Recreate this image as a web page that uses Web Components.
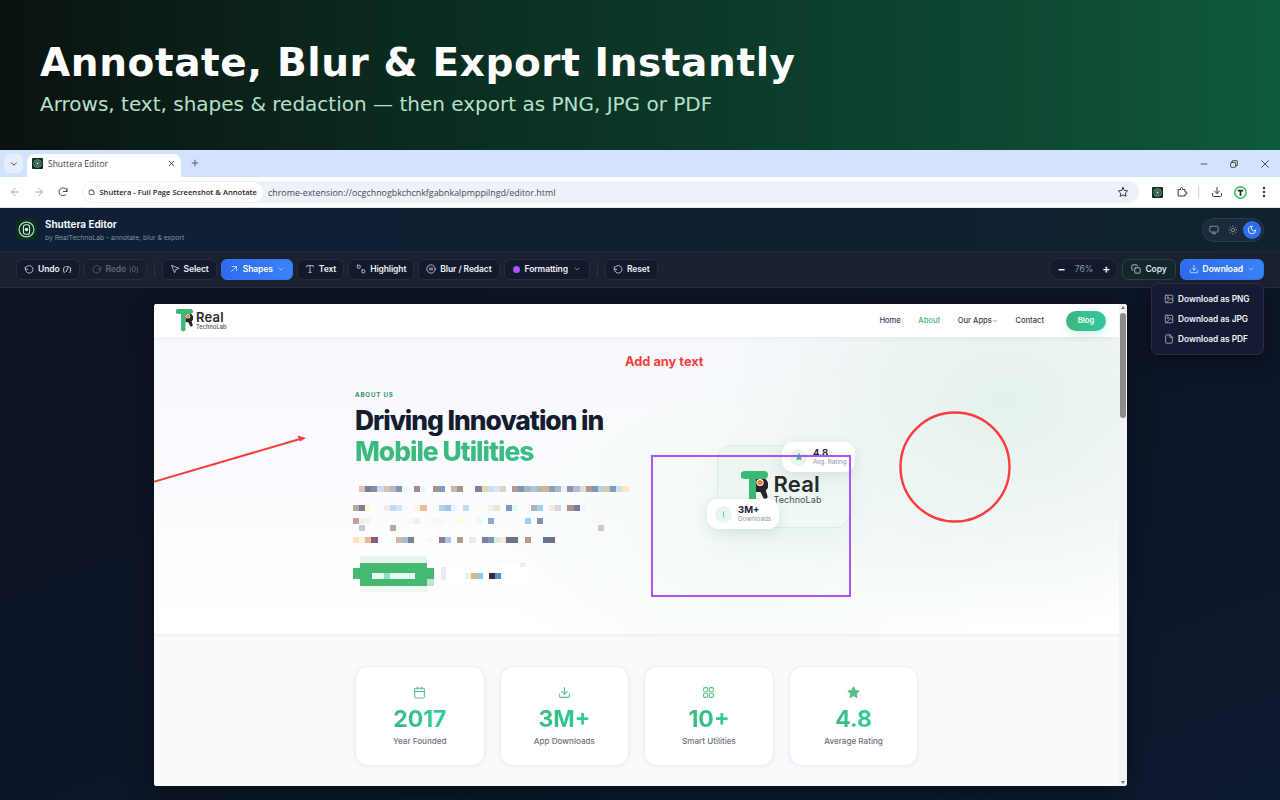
<!DOCTYPE html>
<html>
<head>
<meta charset="utf-8">
<title>Shuttera Editor</title>
<style>
html, body { margin: 0; height: 800px; overflow: hidden; background: #0c1426; }
body { display: flex; flex-direction: column; font-family: Inter, "Liberation Sans", sans-serif; }
</style>
</head>
<body>
<promo-banner title="Annotate, Blur &amp; Export Instantly" subtitle="Arrows, text, shapes &amp; redaction — then export as PNG, JPG or PDF"></promo-banner>
<browser-chrome></browser-chrome>
<editor-header></editor-header>
<editor-toolbar></editor-toolbar>
<canvas-stage></canvas-stage>

<script>
const svg = (body, size = 12, extra = "") =>
    `<svg width="${size}" height="${size}" viewBox="0 0 24 24" fill="none" stroke="currentColor" stroke-width="2" stroke-linecap="round" stroke-linejoin="round" ${extra}>${body}</svg>`;

const ICONS = {
    undo: '<path d="M3 7v6h6"/><path d="M3.5 13a9 9 0 1 0 2.6-6.4L3 9.5"/>',
    redo: '<path d="M21 7v6h-6"/><path d="M20.5 13a9 9 0 1 1-2.6-6.4L21 9.5"/>',
    pointer: '<path d="M4 4l7 17 2.5-7.5L21 11z"/>',
    arrow: '<path d="M6 18L18 6"/><path d="M8 6h10v10"/>',
    text: '<path d="M4 7V4h16v3"/><path d="M12 4v16"/><path d="M9 20h6"/>',
    highlight: '<rect x="3" y="3" width="7" height="7" rx="1"/><rect x="14" y="14" width="7" height="7" rx="1"/>',
    blur: '<circle cx="12" cy="12" r="10"/><path d="M8 10h8"/><path d="M8 14h8"/>',
    chevron: '<path d="M6 9l6 6 6-6"/>',
    copy: '<rect x="9" y="9" width="13" height="13" rx="2"/><path d="M5 15H4a2 2 0 0 1-2-2V4a2 2 0 0 1 2-2h9a2 2 0 0 1 2 2v1"/>',
    download: '<path d="M21 15v4a2 2 0 0 1-2 2H5a2 2 0 0 1-2-2v-4"/><path d="M7 10l5 5 5-5"/><path d="M12 15V3"/>',
    image: '<rect x="3" y="3" width="18" height="18" rx="2"/><circle cx="9" cy="9" r="2"/><path d="M21 15l-5-5L5 21"/>',
    file: '<path d="M14 2H6a2 2 0 0 0-2 2v16a2 2 0 0 0 2 2h12a2 2 0 0 0 2-2V8z"/><path d="M14 2v6h6"/>',
    monitor: '<rect x="2" y="3" width="20" height="14" rx="2"/><path d="M8 21h8"/><path d="M12 17v4"/>',
    sun: '<circle cx="12" cy="12" r="4"/><path d="M12 2v2M12 20v2M4.9 4.9l1.4 1.4M17.7 17.7l1.4 1.4M2 12h2M20 12h2M4.9 19.1l1.4-1.4M17.7 6.3l1.4-1.4"/>',
    moon: '<path d="M12 3a6 6 0 0 0 9 9 9 9 0 1 1-9-9z"/>',
    calendar: '<rect x="3" y="4" width="18" height="18" rx="2"/><path d="M16 2v4M8 2v4M3 10h18"/>',
    grid: '<rect x="3" y="3" width="7.5" height="7.5" rx="2"/><rect x="13.5" y="3" width="7.5" height="7.5" rx="2"/><rect x="3" y="13.5" width="7.5" height="7.5" rx="2"/><rect x="13.5" y="13.5" width="7.5" height="7.5" rx="2"/>',
    star: '<path fill="currentColor" d="M12 2l3.1 6.3 6.9 1-5 4.9 1.2 6.9-6.2-3.3-6.2 3.3L7 14.2 2 9.3l6.9-1z"/>',
    back: '<path d="M19 12H5"/><path d="M12 19l-7-7 7-7"/>',
    forward: '<path d="M5 12h14"/><path d="M12 5l7 7-7 7"/>',
    reload: '<path d="M20 11a8 8 0 1 0-2.3 6.3"/><path d="M20 4v7h-7"/>',
    puzzle: '<path d="M5 7h4V5a2 2 0 0 1 4 0v2h5v5h2a2 2 0 0 1 0 4h-2v4H5z"/>'
};

// little camera ring badge used as favicon and header logo
const ringLogo = size => `<svg width="${size}" height="${size}" viewBox="0 0 24 24">
    <rect width="24" height="24" rx="${size > 16 ? 5 : 2}" fill="#0c3020"/>
    <circle cx="12" cy="12" r="8.500" fill="none" stroke="#a9e0bd" stroke-width="1.300"/>
    <rect x="8.500" y="6.500" width="7" height="11" rx="2.500" fill="none" stroke="#d7efe0" stroke-width="1.200"/>
    <circle cx="12" cy="12" r="2" fill="#d7efe0"/>
</svg>`;

const brandMark = width => `<svg width="${width}" height="${width * 35 / 27}" viewBox="0 0 27 35">
    <path d="M15 7h5.500a7 7 0 0 1 4.300 12.400l1.700 5.600a2.300 2.300 0 0 1-4.300 1.500L19.500 21H15z" fill="#262626"/>
    <path d="M3.500 0H23a3.800 3.800 0 0 1 0 8h-8v24a3.500 3.500 0 0 1-7 0V8H3.500a4 4 0 0 1 0-8z" fill="#3cb878"/>
    <circle cx="19" cy="11.500" r="3.600" fill="#fff"/>
    <circle cx="19" cy="11.500" r="2.600" fill="#f47b2c"/>
</svg>`;

class PromoBanner extends HTMLElement {
    constructor () {
        super();
        this.attachShadow({mode: "open"});
    }
    connectedCallback () {
        this.shadowRoot.innerHTML = `
        <style>
        :host {
            display: block;
            height: 150px;
            box-sizing: border-box;
            padding: 39px 40px 0;
            color: #fff;
            font-family: "DejaVu Sans", sans-serif;
            background: linear-gradient(90deg, #0a1210 0%, #0b2a1f 30%, #0c3c2b 60%, #0e4a33 82%, #0f5a3c 100%);
        }
        h1 { margin: 0; font-size: 39px; line-height: 48px; font-weight: 700; letter-spacing: 0.6px; }
        p { margin: 5px 0 0; font-size: 20px; line-height: 24px; color: #b5e0cb; }
        </style>
        <h1>${this.getAttribute("title")}</h1>
        <p>${this.getAttribute("subtitle")}</p>
        `;
    }
}
customElements.define("promo-banner", PromoBanner);

class BrowserChrome extends HTMLElement {
    constructor () {
        super();
        this.attachShadow({mode: "open"});
    }
    connectedCallback () {
        this.shadowRoot.innerHTML = `
        <style>
        :host { display: block; font-family: "Open Sans", "Liberation Sans", sans-serif; color: #3c4043; }
        .strip { height: 27px; background: #d3e3fd; display: flex; align-items: flex-end; padding-left: 4px; }
        .tablist { width: 19px; height: 19px; margin-bottom: 4px; border-radius: 6px; background: #e6eefd; color: #1f2a44; display: grid; place-items: center; }
        .tab { width: 154px; height: 23px; margin-left: 4px; background: #fff; border-radius: 8px 8px 0 0; display: flex; align-items: center; padding: 0 5px 4px 5px; box-sizing: border-box; gap: 5px; font-size: 8.500px; }
        .tab span { flex: 1; }
        .tab svg:first-child { flex: none; }
        .plus { margin: 0 0 5px 9px; color: #444; display: grid; place-items: center; height: 18px; }
        .win { margin-left: auto; display: flex; align-self: center; color: #333; }
        .win div { width: 30.500px; display: grid; place-items: center; }
        .bar { height: 30px; background: #fff; border-bottom: 1px solid #dfe3ea; display: flex; align-items: center; padding: 0 0 0 9px; box-sizing: content-box; }
        .nav { display: flex; gap: 12px; color: #a8abb0; margin-right: 13px; }
        .nav svg:last-child { color: #474747; }
        .omni { width: 1057px; height: 22px; border-radius: 11px; background: #edf2fa; display: flex; align-items: center; padding: 0 10px 0 1px; box-sizing: border-box; font-size: 8.600px; flex: none; }
        .chip { width: 180px; box-sizing: border-box; height: 20px; border-radius: 10px; background: #fff; display: flex; align-items: center; gap: 4px; padding: 0 6px 0 5px; color: #1f1f1f; font-weight: 600; font-size: 7.600px; white-space: nowrap; }
        .url { margin-left: 5px; color: #474a4f; font-size: 8.900px; flex: 1; }
        .star { color: #333; display: grid; }
        .tools { display: flex; align-items: center; margin-left: 13px; color: #3a3a3a; }
        .tools > * { flex: none; }
        .sep { width: 1px; height: 14px; background: #c9d7ee; }
        </style>
        <div class="strip">
            <div class="tablist">${svg(ICONS.chevron, 10, 'stroke-width="3"')}</div>
            <div class="tab">${ringLogo(11)}<span>Shuttera Editor</span>${svg('<path d="M6 6l12 12M18 6L6 18"/>', 9, 'style="color:#222" stroke-width="3"')}</div>
            <div class="plus">${svg('<path d="M12 5v14M5 12h14"/>', 10)}</div>
            <div class="win">
                <div>${svg('<path d="M5 12h14"/>', 10)}</div>
                <div>${svg('<rect x="4" y="8" width="12" height="12" rx="2"/><path d="M8 8V5a1 1 0 0 1 1-1h10a1 1 0 0 1 1 1v10a1 1 0 0 1-1 1h-3"/>', 10)}</div>
                <div>${svg('<path d="M4 4l16 16M20 4L4 20"/>', 10)}</div>
            </div>
        </div>
        <div class="bar">
            <div class="nav">${svg(ICONS.back, 12)}${svg(ICONS.forward, 12)}${svg(ICONS.reload, 12)}</div>
            <div class="omni">
                <div class="chip">${svg(ICONS.puzzle, 10)}Shuttera - Full Page Screenshot &amp; Annotate</div>
                <span class="url">chrome-extension://ocgchnogbkchcnkfgabnkalpmppilngd/editor.html</span>
                <div class="star">${svg('<path d="M12 3l2.800 5.900 6.400.9-4.600 4.500 1.100 6.400L12 17.700l-5.700 3 1.100-6.400L2.800 9.800l6.400-.9z"/>', 12)}</div>
            </div>
            <div class="tools">
                ${ringLogo(11)}
                <div style="width:13px"></div>
                ${svg(ICONS.puzzle, 12)}
                <div style="width:10px"></div>
                <div class="sep"></div>
                <div style="width:12px"></div>
                ${svg(ICONS.download, 12)}
                <div style="width:11px"></div>
                <svg width="13" height="13" viewBox="0 0 24 24"><circle cx="12" cy="12" r="10.500" fill="#fff" stroke="#35c46f" stroke-width="3"/><path d="M7 7h10v3h-3.500v8h-3v-8H7z" fill="#222"/></svg>
                <div style="width:15px"></div>
                <svg width="4" height="12" viewBox="0 0 4 12" fill="#333"><circle cx="2" cy="2" r="1.200"/><circle cx="2" cy="6" r="1.200"/><circle cx="2" cy="10" r="1.200"/></svg>
            </div>
        </div>
        `;
    }
}
customElements.define("browser-chrome", BrowserChrome);

class EditorHeader extends HTMLElement {
    constructor () {
        super();
        this.attachShadow({mode: "open"});
    }
    connectedCallback () {
        this.shadowRoot.innerHTML = `
        <style>
        :host { display: flex; align-items: center; height: 43px; padding: 0 16px; box-sizing: border-box; background: linear-gradient(90deg, #0f1f35, #0f2030 70%, #10232f); color: #fff; }
        .logo { display: grid; margin-right: 8px; }
        .text { padding-top: 1px; }
        .title { font-size: 9.900px; font-weight: 700; line-height: 12px; color: #f1f5f9; }
        .sub { font-size: 6.800px; line-height: 11px; margin-top: 2px; color: #8290a6; }
        .theme { margin-left: auto; width: 62px; height: 24px; box-sizing: border-box; border: 1px solid #2a3a4f; background: #1b2a3d; border-radius: 12px; display: flex; align-items: center; justify-content: space-between; padding: 0 2px 0 6px; color: #8c9bb0; }
        .on { width: 18px; height: 18px; border-radius: 50%; background: #2f6fed; display: grid; place-items: center; color: #fff; }
        </style>
        <div class="logo">${ringLogo(21)}</div>
        <div class="text">
            <div class="title">Shuttera Editor</div>
            <div class="sub">by RealTechnoLab - annotate, blur &amp; export</div>
        </div>
        <div class="theme">
            ${svg(ICONS.monitor, 10)}
            <span style="margin-left:3px;display:grid">${svg(ICONS.sun, 10)}</span>
            <div class="on">${svg(ICONS.moon, 10)}</div>
        </div>
        `;
    }
}
customElements.define("editor-header", EditorHeader);

class ToolButton extends HTMLElement {
    constructor () {
        super();
        this.attachShadow({mode: "open"});
    }
    connectedCallback () {
        const icon = this.getAttribute("icon");
        const caret = this.hasAttribute("caret") ? `<span class="caret">${svg(ICONS.chevron, 8)}</span>` : "";
        this.shadowRoot.innerHTML = `
        <style>
        :host { display: flex; flex: none; align-items: center; height: 21px; box-sizing: border-box; gap: 4px; padding: 0 7px; border-radius: 6px; border: 1px solid #232c40; background: #131a2e; color: #eef2f7; font-size: 8.500px; letter-spacing: -0.1px; font-weight: 600; white-space: nowrap; }
        :host([variant=primary]) { background: linear-gradient(90deg, #2f6bed, #3b82f6); border-color: #3177f0; color: #fff; }
        :host([variant=muted]) { background: #171e2e; color: #5d6678; }
        :host([variant=copy]) { background: #16252c; border-color: #23463f; color: #dce6ee; }
        svg { display: block; flex: none; }
        .icon { color: #c6cdd8; display: grid; }
        :host([variant=primary]) .icon { color: #cfe0ff; }
        :host([variant=muted]) .icon { color: #566074; }
        .dot { width: 7px; height: 7px; border-radius: 50%; background: #a855f7; }
        .caret { opacity: 0.7; display: grid; }
        ::slotted(small) { font-size: 7px; opacity: 0.8; margin-left: -1px; }
        </style>
        ${icon == "dot" ? '<span class="dot"></span>' : `<span class="icon">${svg(ICONS[icon], 10)}</span>`}
        <slot></slot>
        ${caret}
        `;
    }
}
customElements.define("tool-button", ToolButton);

class EditorToolbar extends HTMLElement {
    constructor () {
        super();
        this.attachShadow({mode: "open"});
    }
    connectedCallback () {
        this.shadowRoot.innerHTML = `
        <style>
        :host { display: flex; align-items: center; height: 37px; box-sizing: border-box; padding: 0 16px 1px; gap: 4px; background: #1a2130; border-top: 1px solid #1d2a3b; border-bottom: 1px solid #252d3d; position: relative; z-index: 5; }
        .sep { width: 1px; height: 15px; background: #2b3445; margin: 0 3px; }
        .zoom { margin-left: auto; display: flex; align-items: center; justify-content: space-between; width: 69px; height: 22px; box-sizing: border-box; padding: 0 7px; border-radius: 11px; background: #131a2e; border: 1px solid #232c40; color: #fff; font-size: 8.500px; }
        .zoom b { font-size: 12px; font-weight: 600; line-height: 1; }
        .zoom span { color: #8b97ab; }
        .menu { position: absolute; right: 16px; top: 31px; width: 113px; height: 72px; box-sizing: border-box; padding: 5px 12px; border-radius: 7px; background: #141b33; border: 1px solid #252e45; color: #f1f4f9; font-size: 8.300px; font-weight: 600; box-shadow: 0 8px 18px rgba(0,0,0,.35); }
        .menu div { display: flex; align-items: center; gap: 4px; height: 20px; white-space: nowrap; }
        .menu svg { color: #aab3c2; flex: none; }
        </style>
        <tool-button icon="undo">Undo <small>(7)</small></tool-button>
        <tool-button icon="redo" variant="muted">Redo <small>(0)</small></tool-button>
        <div class="sep"></div>
        <tool-button icon="pointer">Select</tool-button>
        <tool-button icon="arrow" variant="primary" caret>Shapes</tool-button>
        <tool-button icon="text">Text</tool-button>
        <tool-button icon="highlight">Highlight</tool-button>
        <tool-button icon="blur">Blur / Redact</tool-button>
        <tool-button icon="dot" caret style="padding:0 8px;gap:5px">Formatting</tool-button>
        <div class="sep"></div>
        <tool-button icon="undo">Reset</tool-button>
        <div class="zoom"><b>−</b><span>76%</span><b>+</b></div>
        <tool-button icon="copy" variant="copy" style="padding:0 8px">Copy</tool-button>
        <tool-button icon="download" variant="primary" caret style="padding:0 8px">Download</tool-button>
        <div class="menu">
            <div>${svg(ICONS.image, 10)}Download as PNG</div>
            <div>${svg(ICONS.image, 10)}Download as JPG</div>
            <div>${svg(ICONS.file, 10)}Download as PDF</div>
        </div>
        `;
    }
}
customElements.define("editor-toolbar", EditorToolbar);

class BrandLogo extends HTMLElement {
    constructor () {
        super();
        this.attachShadow({mode: "open"});
    }
    connectedCallback () {
        const big = this.hasAttribute("big");
        this.shadowRoot.innerHTML = `
        <style>
        :host { display: inline-flex; align-items: center; gap: ${big ? 5 : 3}px; color: #2a2a2a; }
        .real { font-size: ${big ? 22 : 13}px; line-height: ${big ? 21 : 13}px; font-weight: 600; display: block; letter-spacing: .2px; }
        .lab { font-size: ${big ? 9 : 5.600}px; line-height: ${big ? 9 : 7}px; display: block; color: #4a4a4a; letter-spacing: .1px; }
        svg { display: block; }
        </style>
        ${brandMark(big ? 27 : 17)}
        <div><span class="real">Real</span><span class="lab">TechnoLab</span></div>
        `;
    }
}
customElements.define("brand-logo", BrandLogo);

class SiteNav extends HTMLElement {
    constructor () {
        super();
        this.attachShadow({mode: "open"});
    }
    connectedCallback () {
        this.shadowRoot.innerHTML = `
        <style>
        :host { display: flex; align-items: center; height: 33px; padding: 0 13px 0 22px; background: #fff; font-size: 7.600px; font-weight: 500; color: #374151; box-shadow: 0 1px 6px rgba(30,50,80,.06); position: relative; z-index: 1; }
        nav { margin-left: auto; display: flex; align-items: center; gap: 17.500px; }
        .active { color: #46b97a; }
        .apps { display: flex; align-items: center; gap: 0; }
        .blog { margin-left: 4.500px; width: 40px; height: 20px; border-radius: 10px; background: linear-gradient(90deg, #3fb67c, #2fc9a2); color: #fff; font-weight: 600; display: grid; place-items: center; box-shadow: 0 4px 9px rgba(50,190,140,.2); }
        </style>
        <brand-logo></brand-logo>
        <nav>
            <span>Home</span>
            <span class="active">About</span>
            <span class="apps">Our Apps ${svg(ICONS.chevron, 6)}</span>
            <span>Contact</span>
            <span class="blog">Blog</span>
        </nav>
        `;
    }
}
customElements.define("site-nav", SiteNav);

// a line of pixelated text: one cell per colour, "-" leaves a gap
class PixelRow extends HTMLElement {
    constructor () {
        super();
        this.attachShadow({mode: "open"});
    }
    connectedCallback () {
        const cells = this.getAttribute("cells").split(",").map(c =>
            `<i style="background:${c == "-" ? "transparent" : "#" + c}"></i>`).join("");
        this.shadowRoot.innerHTML = `
        <style>
        :host { display: flex; height: 6px; }
        i { display: block; width: 6.140px; height: 6px; flex: none; }
        </style>
        ${cells}
        `;
    }
}
customElements.define("pixel-row", PixelRow);

class FloatBadge extends HTMLElement {
    constructor () {
        super();
        this.attachShadow({mode: "open"});
    }
    connectedCallback () {
        this.shadowRoot.innerHTML = `
        <style>
        :host { position: absolute; display: flex; align-items: center; gap: 6px; height: 30px; box-sizing: border-box; padding: 0 8px; border-radius: 11px; background: #fff; box-shadow: 0 4px 14px rgba(20,50,60,.10); }
        .ic { width: 17px; height: 17px; border-radius: 50%; background: #e9f6f0; color: #46b97a; display: grid; place-items: center; }
        b { display: block; font-size: 9.500px; line-height: 11px; font-weight: 700; color: #1b2236; }
        small { display: block; font-size: 6.300px; line-height: 9px; color: #8b93a3; white-space: nowrap; }
        </style>
        <div class="ic"><slot></slot></div>
        <div><b>${this.getAttribute("value")}</b><small>${this.getAttribute("label")}</small></div>
        `;
    }
}
customElements.define("float-badge", FloatBadge);

class StatCard extends HTMLElement {
    constructor () {
        super();
        this.attachShadow({mode: "open"});
    }
    connectedCallback () {
        this.shadowRoot.innerHTML = `
        <style>
        :host { display: flex; flex-direction: column; align-items: center; width: 129.600px; height: 100px; box-sizing: border-box; padding-top: 19px; border-radius: 13px; background: #fff; border: 1px solid #eef0f4; box-shadow: 0 1px 4px rgba(30,40,70,.06); }
        .ic { color: #5bc086; height: 13px; display: grid; }
        .num { margin-top: 6px; font-size: 23px; line-height: 29px; font-weight: 700; background: linear-gradient(90deg, #3db97c, #2fcca4); -webkit-background-clip: text; background-clip: text; color: transparent; }
        .lab { margin-top: 2px; font-size: 8.100px; line-height: 11px; font-weight: 500; color: #6b7280; }
        </style>
        <div class="ic"><slot></slot></div>
        <div class="num">${this.getAttribute("value")}</div>
        <div class="lab">${this.getAttribute("label")}</div>
        `;
    }
}
customElements.define("stat-card", StatCard);

class SitePage extends HTMLElement {
    constructor () {
        super();
        this.attachShadow({mode: "open"});
    }
    connectedCallback () {
        this.shadowRoot.innerHTML = `
        <style>
        :host { display: block; height: 482px; overflow: hidden; background: #f9fafc; }
        .hero { height: 297px; box-sizing: border-box; padding: 54px 0 0 201px; display: grid; grid-template-columns: 362px 133px; align-items: start;
            background: radial-gradient(ellipse 300px 230px at 88% 22%, #e4f1ec, rgba(228,241,236,0) 100%), radial-gradient(ellipse 260px 180px at 62% 68%, #f3faf6, rgba(243,250,246,0) 100%), linear-gradient(180deg, #f8f9fd 0%, #fbfcfe 60%, #fff 100%);
            box-shadow: 0 1px 3px rgba(30,40,70,.08); }
        .eyebrow { font-size: 6.200px; line-height: 8px; font-weight: 700; letter-spacing: .8px; color: #3a8f67; }
        h1 { margin: 6px 0 0; font-size: 26.400px; line-height: 31px; font-weight: 800; letter-spacing: -1.030px; color: #141c30; white-space: nowrap; }
        h1 span { display: block; background: linear-gradient(90deg, #3db97c, #36c090); -webkit-background-clip: text; background-clip: text; color: transparent; }
        .blur { margin: 19px 0 0 -2px; filter: blur(.4px); }
        .visual { position: relative; margin-top: 54px; height: 83px; }
        .logo-card { width: 133px; height: 83px; box-sizing: border-box; border-radius: 14px; border: 1px solid #d9eee3; background: linear-gradient(180deg, #e9f5ef, #f1f9f5); display: flex; align-items: center; justify-content: center; padding: 4px 4px 0 0; box-shadow: 0 12px 30px rgba(60,180,130,.07); }
        .stats { display: flex; gap: 15px; padding: 32px 0 0 201px; }
        .stats svg { display: block; }
        </style>
        <site-nav></site-nav>
        <section class="hero">
            <div>
                <div class="eyebrow">ABOUT US</div>
                <h1>Driving Innovation in<span>Mobile Utilities</span></h1>
                <div class="blur">
                    <pixel-row style="margin-left:6px" cells="dfc3b0,7d7d8c,7a90b2,cfdde8,cfc6b6,b9b5b8,8294b4,eef6fb,f6fbff,a68a92,edf8fc,-,b59188,7e9cc6,-,c9b9ac,a8968e,fdfbf6,-,7d8498,e7d6a8,c8e0f2,dbe6ee,ddd3c4,-,b09c90,8097b5,a4b6c4,a2cbe8,c4b5a2,d0b59a,8aa0bc,a6bccb,eef2f6,8c94b0,adc0d2,e5ded0,b09a90,7f96ba,bcd0de,d6c8a8,7f9cc4,d3e2ea,f9e8cc"></pixel-row>
                    <pixel-row style="margin-top:13px" cells="b8a69c,7f7e94,fdf8d8,-,-,f6ebe0,bcdcf2,cfe6f6,f4fbff,-,fbf4e4,e8c09a,-,-,a8d4f4,a8c0e4,e6f8fe,-,c2dbec,-,-,-,f6efe4,f0e4d8,-,8098bc,e4f6fe,-,-,b4b0bc,a0d0f0,-,f6e8dc,d8d8e0,-,ad9188,7a7a94,f2f4f8"></pixel-row>
                    <pixel-row style="margin-top:7px" cells="c0a49c,f4eeec,f6f2f0,-,-,-,-,-,-,fbf8f0,f0f0ec,-,-,faf6f0,f6f8fa,-,-,fffcd8,-,-,f0f6fc,-,8ca8d0,-,-,-,-,-,a0d0f4,-,8090b8,-,-,-,-,-,-,-,-,fbf8f0,f4f8fc"></pixel-row>
                    <pixel-row style="margin-left:6px;margin-top:1px" cells="c0ced8,-,-,-,-,b8a8a4,-,-,-,-,-,-,-,-,-,-,-,-,-,-,-,-,-,-,-,-,-,-,-,-,-,-,-,-,-,-,-,-,-,d0c8c0"></pixel-row>
                    <pixel-row style="margin-top:6px" cells="fde0c8,fdf4d8,eeb896,8a5c78,-,-,-,d0b8a4,a8bcd0,7c8494,-,-,f8f8fa,-,8c7c98,a8c8e8,-,b09c8c,-,e4ecf8,-,788098,7c94bc,d8ece4,f6ead8,6c7484,6c7484,-,c09880,-,-,68748c,68748c"></pixel-row>
                </div>
                <svg width="180" height="36" viewBox="0 0 180 36" style="display:block;margin:13px 0 0 -2px;filter:blur(.5px)">
                    <rect x="7" y="0" width="67" height="7" fill="#e6f5ec"/>
                    <rect x="7" y="7" width="67" height="23" fill="#46b871"/>
                    <rect x="0" y="12" width="81" height="11" fill="#46b871"/>
                    <rect x="74" y="23" width="7" height="7" fill="#bfe5cc"/>
                    <rect x="7" y="30" width="67" height="6" fill="#eef8f2"/>
                    <rect x="19" y="17" width="43" height="6" fill="#e4f8f0"/>
                    <rect x="31" y="17" width="6" height="6" fill="#8fe0c8"/>
                    <rect x="88" y="11" width="6" height="13" fill="#e8eaee"/>
                    <rect x="93" y="7" width="80" height="23" fill="#fff"/>
                    <rect x="167" y="7" width="6" height="4" fill="#eceef0"/>
                    <rect x="112" y="17" width="6" height="6" fill="#f6eee0"/><rect x="118" y="17" width="6" height="6" fill="#d8b890"/><rect x="124" y="17" width="6" height="6" fill="#98c8ee"/>
                    <rect x="136" y="17" width="6" height="6" fill="#332c30"/><rect x="142" y="17" width="6" height="6" fill="#5f88c4"/>
                </svg>
            </div>
            <div class="visual">
                <div class="logo-card"><brand-logo big></brand-logo></div>
                <float-badge value="4.8" label="Avg. Rating" style="left:65px;top:-3px">${svg(ICONS.star, 8)}</float-badge>
                <float-badge value="3M+" label="Downloads" style="left:-10px;top:54px">${svg('<path d="M12 5v14"/>', 9)}</float-badge>
            </div>
        </section>
        <section class="stats">
            <stat-card value="2017" label="Year Founded">${svg(ICONS.calendar, 13)}</stat-card>
            <stat-card value="3M+" label="App Downloads">${svg(ICONS.download, 13)}</stat-card>
            <stat-card value="10+" label="Smart Utilities">${svg(ICONS.grid, 13)}</stat-card>
            <stat-card value="4.8" label="Average Rating">${svg(ICONS.star, 13)}</stat-card>
        </section>
        `;
    }
}
customElements.define("site-page", SitePage);

class CanvasStage extends HTMLElement {
    constructor () {
        super();
        this.attachShadow({mode: "open"});
    }
    connectedCallback () {
        this.shadowRoot.innerHTML = `
        <style>
        :host { display: block; flex: 1; padding: 16px 153px 0 154px; background: linear-gradient(160deg, #0c1324 0%, #0c1628 60%, #0e1a30 100%); }
        .sheet { position: relative; width: 973px; height: 482px; border-radius: 3px; overflow: hidden; background: #fff; box-shadow: 0 6px 24px rgba(0,0,0,.4); display: grid; grid-template-columns: 965px 8px; }
        .scroll { background: #f3f3f3; position: relative; }
        .thumb { position: absolute; left: 1px; top: 9px; width: 6px; height: 105px; border-radius: 3px; background: #8c8c8c; }
        .up, .down { position: absolute; left: 2px; width: 0; height: 0; border: 2px solid transparent; }
        .up { top: 2px; border-bottom: 3px solid #777; border-top: 0; }
        .down { bottom: 2px; border-top: 3px solid #777; border-bottom: 0; }
        .marks { position: absolute; left: 0; top: 0; pointer-events: none; }
        .note { position: absolute; left: 471px; top: 50px; font-size: 12.800px; line-height: 16px; font-weight: 700; color: #f83a3a; white-space: nowrap; }
        </style>
        <div class="sheet">
            <site-page></site-page>
            <div class="scroll"><div class="up"></div><div class="thumb"></div><div class="down"></div></div>
            <svg class="marks" width="973" height="482" viewBox="0 0 973 482" fill="none">
                <path d="M-4 179L146 135" stroke="#fb3c3c" stroke-width="2"/>
                <path d="M152 134l-8.500-2.500 2.500 6z" fill="#fb3c3c"/>
                <circle cx="801" cy="163" r="54.500" stroke="#fb3c3c" stroke-width="2.400"/>
                <rect x="498" y="152" width="198" height="140" stroke="#a855f7" stroke-width="2"/>
            </svg>
            <div class="note">Add any text</div>
        </div>
        `;
    }
}
customElements.define("canvas-stage", CanvasStage);
</script>
</body>
</html>
